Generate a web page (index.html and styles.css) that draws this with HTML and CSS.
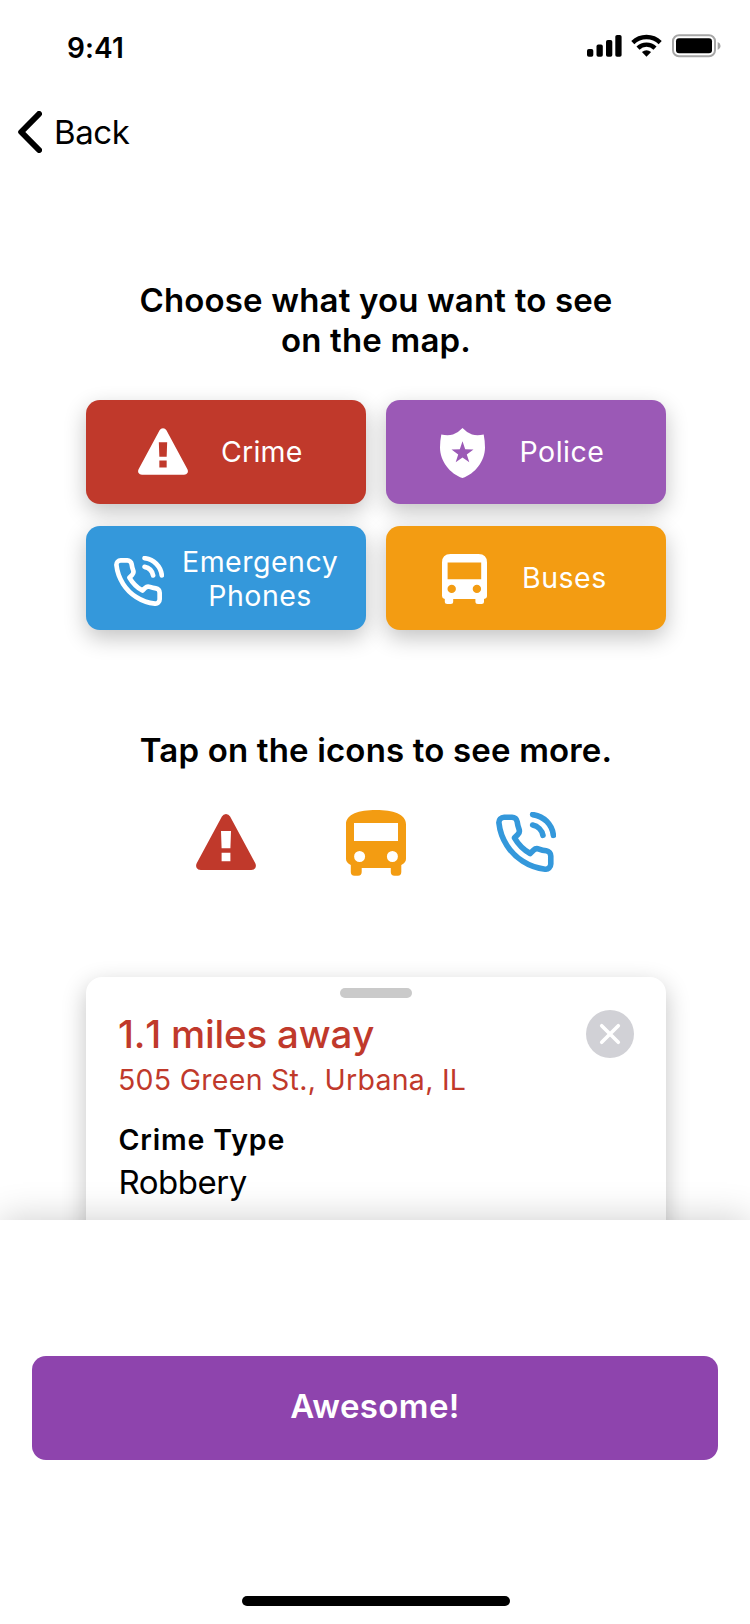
FILE: index.html
```html
<!DOCTYPE html>
<html lang="en">
<head>
<meta charset="utf-8">
<title>Map guide</title>
<link rel="stylesheet" href="styles.css">
</head>
<body>
<svg class="defs" aria-hidden="true">
  <symbol id="warning" viewBox="0 0 60 56">
    <path fill-rule="evenodd" d="M25.900 2.600Q27.300 0 30 0T34.100 2.600L59.300 49.300Q60.500 51.800 59.300 53.900Q58.200 56 55.300 56H4.700Q1.800 56 .7 53.900Q-.5 51.800 .7 49.300ZM25 17L25.600 34.200H34.400L35 17ZM25.600 38.800V47.200H34.400V38.800Z"/>
  </symbol>
  <symbol id="phone" viewBox="1 0 23 23">
    <path fill="none" stroke="currentColor" stroke-width="2.150" stroke-linecap="round" stroke-linejoin="round" d="M15.050 5A5 5 0 0 1 19 8.950M15.050 1A9 9 0 0 1 23 8.940M22 16.920v3a2 2 0 0 1-2.180 2 19.790 19.790 0 0 1-8.630-3.070 19.500 19.500 0 0 1-6-6 19.790 19.790 0 0 1-3.070-8.670A2 2 0 0 1 4.110 2h3a2 2 0 0 1 2 1.720 12.840 12.840 0 0 0 .7 2.810 2 2 0 0 1-.45 2.110L8.090 9.910a16 16 0 0 0 6 6l1.270-1.270a2 2 0 0 1 2.110-.45 12.840 12.840 0 0 0 2.810.7A2 2 0 0 1 22 16.920z"/>
  </symbol>
</svg>

<main class="content">
  <div class="status">
    <span class="time">9:41</span>
    <svg class="status-icons" width="134" height="24" viewBox="0 0 134 24">
      <rect x="0" y="15" width="6.300" height="7.700" rx="1.800"/>
      <rect x="9.500" y="10.600" width="6.300" height="12.100" rx="1.800"/>
      <rect x="19" y="6" width="6.300" height="16.700" rx="1.800"/>
      <rect x="28.300" y="1" width="6.300" height="21.700" rx="1.800"/>
      <g fill="none" stroke="#000" stroke-width="4.400">
        <path d="M45.800 8.600A19.700 19.700 0 0 1 73.200 8.600"/>
        <path d="M51 14.100A12.200 12.200 0 0 1 68 14.100"/>
      </g>
      <path d="M59.500 22.700L54.900 18Q59.500 14.300 64.100 18Z"/>
      <rect x="86" y="1.300" width="42" height="21" rx="6" fill="none" stroke="#a6a6a6" stroke-width="2"/>
      <rect x="89" y="4.300" width="36" height="15" rx="3"/>
      <path fill="#a6a6a6" d="M130.700 8Q133.600 9.200 133.600 12T130.700 15.900Z"/>
    </svg>
  </div>

  <div class="nav">
    <svg width="24" height="42" viewBox="0 0 24 42"><path fill="none" stroke="#000" stroke-width="6" stroke-linecap="round" stroke-linejoin="round" d="M21 3L3.200 21L21 39"/></svg>
    <span class="back">Back</span>
  </div>

  <h1 class="heading">Choose what you want to see<br>on the map.</h1>

  <div class="tiles">
    <div class="tile crime">
      <svg width="50" height="47" fill="#fff"><use href="#warning"/></svg>
      <span>Crime</span>
    </div>
    <div class="tile police">
      <svg width="45" height="50" viewBox="0 0 45 50"><path fill="#fff" fill-rule="evenodd" d="M22.500 0Q26.500 4.400 32 6.500Q37.500 8 43.700 6.400Q45 13 45 19.500C45 33 35 46 22.500 50C10 46 0 33 0 19.500Q0 13 1.300 6.400Q7.500 8 13 6.500Q18.500 4.400 22.500 0ZM22.500 13.300L19.800 21.200L11.500 21.400L18.200 26.400L15.700 34.300L22.500 29.600L29.300 34.300L26.800 26.400L33.500 21.400L25.200 21.200Z"/></svg>
      <span>Police</span>
    </div>
    <div class="tile emergency">
      <svg width="50" height="50"><use href="#phone"/></svg>
      <span>Emergency<br>Phones</span>
    </div>
    <div class="tile buses">
      <svg width="45" height="50" viewBox="0 0 45 50"><path fill="#fff" fill-rule="evenodd" d="M8.500 0H36.500Q45 0 45 8.500V42Q45 44.300 42 45V47.500Q42 50 39.500 50H36Q33.400 50 33.400 47.500V45H11.200V47.500Q11.200 50 8.700 50H5.400Q2.800 50 2.800 47.500V45Q0 44.300 0 42V8.500Q0 0 8.500 0ZM5.600 8.500V25.200H39.200V8.500ZM9.700 30.700A4.200 4.200 0 1 0 9.700 39.100A4.200 4.200 0 1 0 9.700 30.700ZM34.900 30.700A4.200 4.200 0 1 0 34.900 39.100A4.200 4.200 0 1 0 34.900 30.700Z"/></svg>
      <span>Buses</span>
    </div>
  </div>

  <h2 class="heading second">Tap on the icons to see more.</h2>

  <div class="icons">
    <svg class="icon-warning" width="60" height="56"><use href="#warning"/></svg>
    <svg class="icon-bus" width="60" height="66" viewBox="0 0 60 66"><path fill-rule="evenodd" d="M0 14.500C0 4 13 0 30 0S60 4 60 14.500V49Q60 52.500 55.300 55V62Q55.300 65.700 51.800 65.700H48.500Q44.800 65.700 44.800 62V58H15.700V62Q15.700 65.700 12 65.700H8.500Q4.800 65.700 4.800 62V55Q0 52.500 0 49ZM8 13V31H52V13ZM13.600 41A5.500 5.500 0 1 0 13.600 52A5.500 5.500 0 1 0 13.600 41ZM46.400 41A5.500 5.500 0 1 0 46.400 52A5.500 5.500 0 1 0 46.400 41Z"/></svg>
    <svg class="icon-phone" width="60" height="60"><use href="#phone"/></svg>
  </div>

  <section class="card">
    <div class="handle"></div>
    <div class="card-head">
      <div class="distance">1.1 miles away</div>
      <svg width="48" height="48" viewBox="0 0 48 48"><circle cx="24" cy="24" r="24" fill="#d1d1d6"/><path stroke="#fff" stroke-width="3.600" stroke-linecap="round" d="M15.700 15.700L32.300 32.300M32.300 15.700L15.700 32.300"/></svg>
    </div>
    <div class="address">505 Green St., Urbana, IL</div>
    <div class="label">Crime Type</div>
    <div class="value">Robbery</div>
  </section>
</main>

<footer class="footer">
  <div class="button">Awesome!</div>
  <div class="home-bar"></div>
</footer>
</body>
</html>
```
FILE: styles.css
```css
* { box-sizing: border-box; }

body {
  margin: 0;
  height: 1624px;
  display: flex;
  flex-direction: column;
  overflow: hidden;
  background: #fff;
  color: #000;
  font-family: Inter, "Liberation Sans", sans-serif;
}

svg { display: block; flex: none; }
.defs { display: none; }

.content {
  height: 1220px;
  flex: none;
  overflow: hidden;
}

.status {
  height: 94px;
  padding: 0 29px 0 67px;
  display: flex;
  align-items: center;
  justify-content: space-between;
}
.time {
  padding-top: 2px;
  font-size: 28px;
  font-weight: 600;
  letter-spacing: 0.1px;
}
.status-icons { margin-bottom: 2px; }

.nav {
  height: 76px;
  padding-left: 18px;
  display: flex;
  align-items: center;
  gap: 12px;
}
.back { font-size: 33px; letter-spacing: -0.4px; }

.heading {
  margin: 110px 0 40px;
  padding-left: 2px;
  font-size: 33px;
  line-height: 40px;
  font-weight: 600;
  letter-spacing: 0.17px;
  text-align: center;
}
.second { margin: 100px 0 40px; }

.tiles {
  margin: 0 84px 0 86px;
  display: grid;
  grid-template-columns: 280px 280px;
  gap: 22px 20px;
}
.tile {
  height: 104px;
  display: flex;
  align-items: center;
  border-radius: 14px;
  box-shadow: 0 8px 22px rgba(0, 0, 0, 0.24);
  color: #fff;
  font-size: 28.5px;
  line-height: 34px;
  letter-spacing: 0.5px;
  text-align: center;
}
.crime { padding-left: 52px; gap: 33px; background: #c0392b; }
.crime svg { margin-bottom: 2px; }
.crime span { letter-spacing: 0.2px; }
.police { padding-left: 54px; gap: 34.5px; background: #9b59b6; }
.emergency { padding-left: 28px; gap: 18px; background: #3498db; }
.emergency svg { margin-top: 6px; }
.emergency span { padding-top: 2px; }
.buses { padding-left: 56px; gap: 35px; background: #f39c12; }
.buses svg { margin-top: 2px; }
.police svg { margin-top: 2px; }

.icons {
  height: 66px;
  display: flex;
  align-items: center;
  justify-content: center;
  gap: 90px;
  padding-left: 2px;
}
.icon-warning { fill: #c0392b; margin-bottom: 2px; }
.icon-bus { fill: #f39c12; }
.icon-phone { color: #3498db; margin-bottom: 2px; }

.card {
  height: 300px;
  margin: 101px 84px 0 86px;
  padding: 11px 32px 0;
  border-radius: 16px;
  background: #fff;
  box-shadow: 0 8px 24px rgba(0, 0, 0, 0.24);
}
.handle {
  width: 72px;
  height: 10px;
  margin: 0 auto;
  border-radius: 5px;
  background: #cacaca;
}
.card-head {
  margin-top: 12px;
  display: flex;
  align-items: center;
  justify-content: space-between;
}
.distance {
  color: #c0392b;
  font-size: 38.5px;
  line-height: 48px;
  font-weight: 500;
  font-kerning: none;
  letter-spacing: -0.2px;
}
.address {
  margin-top: 5px;
  color: #c0392b;
  font-size: 28.5px;
  line-height: 34px;
  letter-spacing: 0.28px;
}
.label {
  margin-top: 26px;
  padding-left: 0.5px;
  font-size: 28.5px;
  line-height: 34px;
  font-weight: 600;
  letter-spacing: 0.85px;
}
.value {
  margin-top: 5px;
  padding-left: 0.5px;
  font-size: 33px;
  line-height: 40px;
  letter-spacing: -0.5px;
}

.footer {
  position: relative;
  height: 404px;
  flex: none;
  padding: 136px 32px 0;
  background: #fff;
  box-shadow: 0 0 36px rgba(0, 0, 0, 0.2);
}
.button {
  height: 104px;
  border-radius: 14px;
  background: #8e44ad;
  color: #fff;
  font-size: 33px;
  line-height: 100px;
  font-weight: 600;
  letter-spacing: 0.4px;
  text-align: center;
}
.home-bar {
  width: 268px;
  height: 10px;
  margin: 136px 0 0 210px;
  border-radius: 5px;
  background: #000;
}
```
